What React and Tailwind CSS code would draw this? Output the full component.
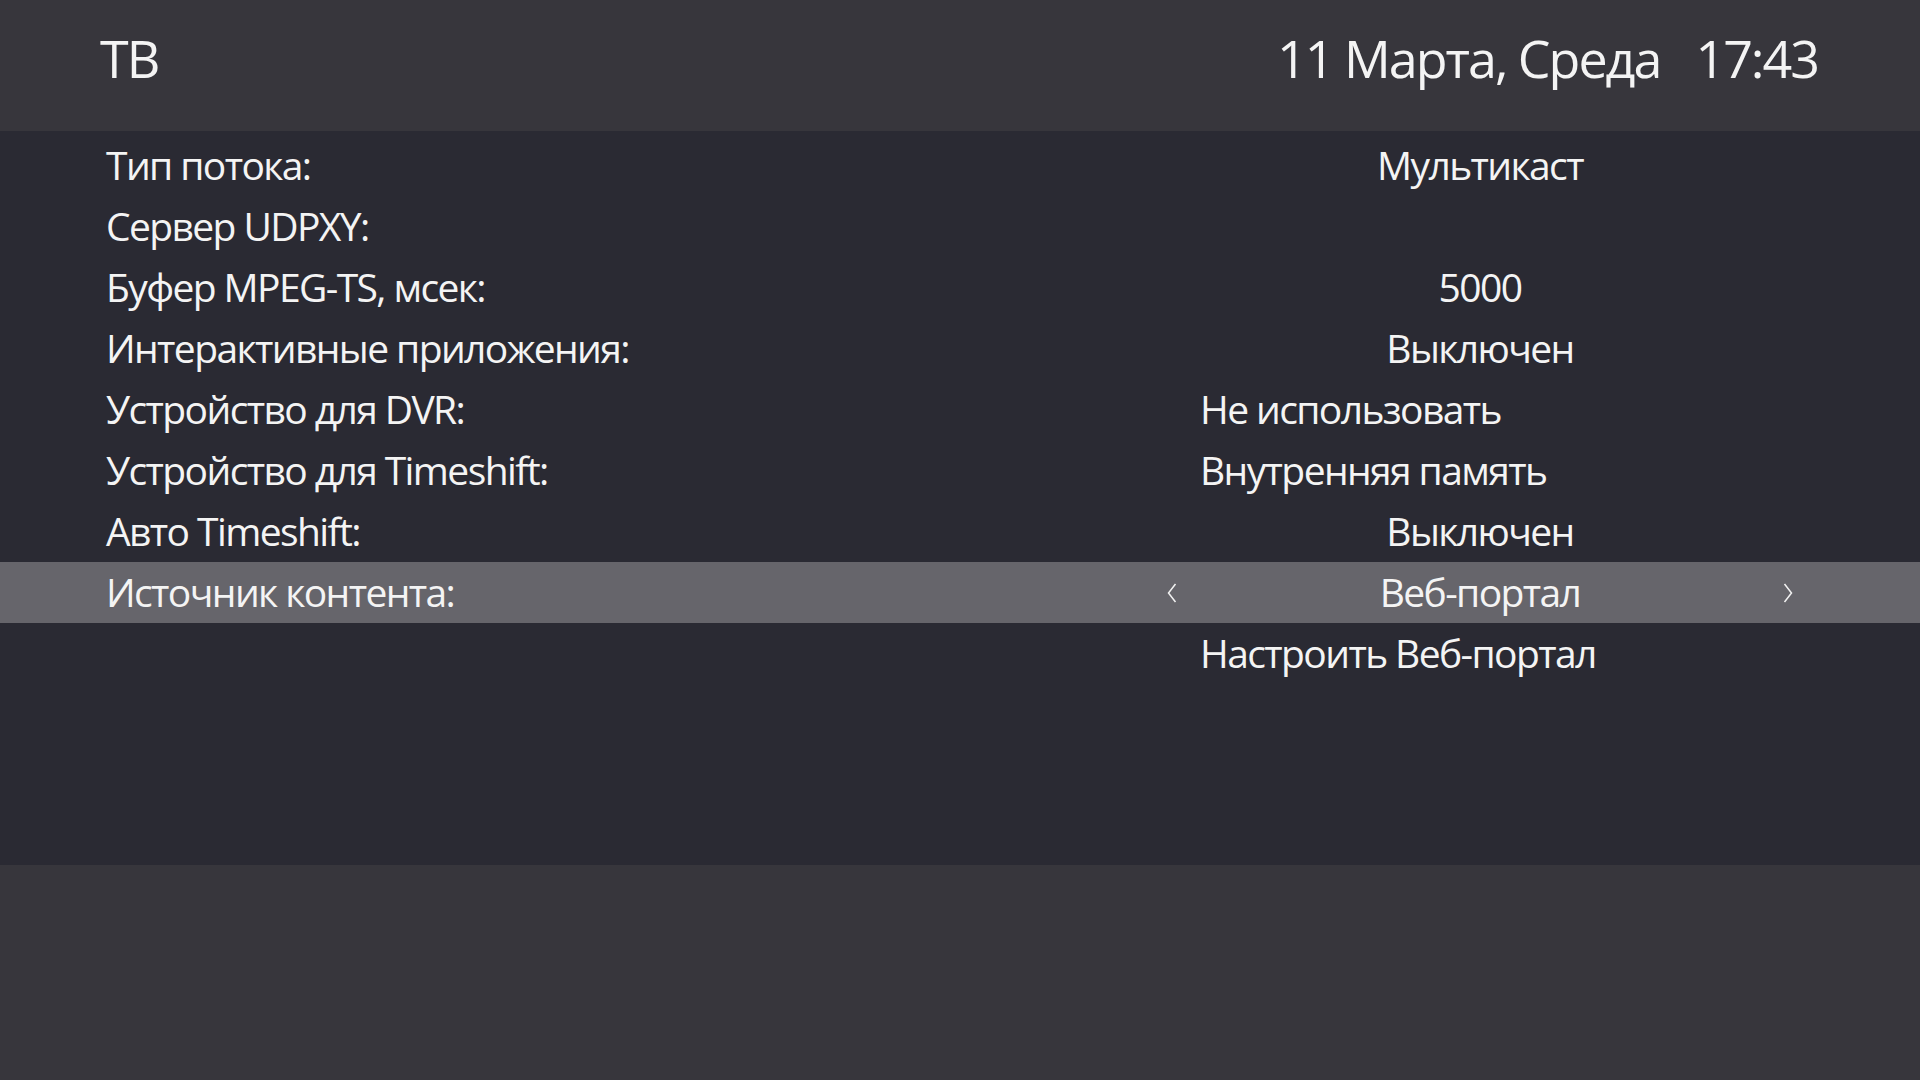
import React from "react";

const rows = [
  { label: "Тип потока:", value: "Мультикаст", align: "center" },
  { label: "Сервер UDPXY:", value: "", align: "center" },
  { label: "Буфер MPEG-TS, мсек:", value: "5000", align: "center" },
  { label: "Интерактивные приложения:", value: "Выключен", align: "center" },
  { label: "Устройство для DVR:", value: "Не использовать", align: "left" },
  { label: "Устройство для Timeshift:", value: "Внутренняя память", align: "left" },
  { label: "Авто Timeshift:", value: "Выключен", align: "center" },
  { label: "Источник контента:", value: "Веб-портал", align: "center", active: true },
  { label: "", value: "Настроить Веб-портал", align: "left" },
];

const Arrow = ({ dir }) => (
  <svg width="12" height="22" viewBox="0 0 12 22" fill="none" stroke="#f2f2f2" strokeWidth="1.5">
    {dir === "left" ? <path d="M9.5 2 L2.5 11 L9.5 20" /> : <path d="M2.5 2 L9.5 11 L2.5 20" />}
  </svg>
);

export default function App() {
  return (
    <div
      className="w-[1920px] h-[1080px] flex flex-col bg-[#37363c] text-[#f4f4f4] overflow-hidden"
      style={{ fontFamily: '"Open Sans", sans-serif' }}
    >
      {/* header */}
      <div className="h-[131px] shrink-0 flex items-start justify-between pt-[32px] pl-[100px] pr-[102px] text-[52px] leading-none tracking-[-2px]">
        <div>ТВ</div>
        <div className="flex gap-[35px]">
          <span>11 Марта, Среда</span>
          <span>17:43</span>
        </div>
      </div>

      {/* settings list */}
      <div className="h-[734px] shrink-0 bg-[#2a2a33] pt-[4px] flex flex-col text-[39px] tracking-[-1.6px]">
        {rows.map((r, i) => (
          <div
            key={i}
            className={`h-[61px] flex items-center ${r.active ? "bg-[#66656b]" : ""}`}
          >
            <div className="w-[1160px] pl-[106px]">{r.label}</div>
            <div className="w-[640px] flex items-center">
              <div className="w-[24px] flex justify-center">{r.active && <Arrow dir="left" />}</div>
              <div className={`flex-1 ${r.align === "center" ? "text-center" : "text-left pl-[16px]"}`}>
                {r.value}
              </div>
              <div className="w-[24px] flex justify-center">{r.active && <Arrow dir="right" />}</div>
            </div>
          </div>
        ))}
      </div>

      <div className="flex-1" />
    </div>
  );
}
